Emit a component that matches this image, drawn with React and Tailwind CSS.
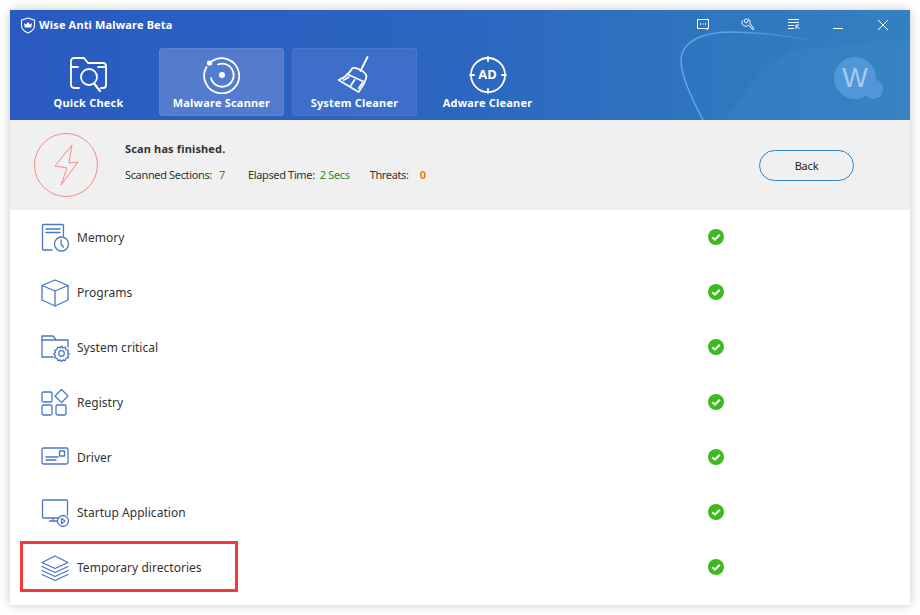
const font = { fontFamily: '"Noto Sans", Tahoma, sans-serif' };

const stroke = { fill: 'none', stroke: '#4a76c4', strokeWidth: 1.3, strokeLinejoin: 'round', strokeLinecap: 'round' };

const rowIcons = {
  memory: (
    <svg width="30" height="30" viewBox="0 0 30 30" {...stroke}>
      <path d="M12 27H3.500a1 1 0 0 1-1-1V2.500a1 1 0 0 1 1-1h19a1 1 0 0 1 1 1V13" />
      <path d="M6 6h14M6 9.500h14" />
      <circle cx="21.500" cy="21" r="7" />
      <path d="M21 17v4l2.500 3" />
    </svg>
  ),
  programs: (
    <svg width="30" height="30" viewBox="0 0 30 30" {...stroke}>
      <path d="M15 2 28 7.500V22L15 28 2 22V7.500Z" />
      <path d="M2 7.500 15 13 28 7.500M15 13v15" />
    </svg>
  ),
  system: (
    <svg width="30" height="30" viewBox="0 0 30 30" {...stroke}>
      <path d="M13 24H2V3h11l3 4h12v7" />
      <path d="M2 7h14" />
      <circle cx="21.500" cy="20.500" r="2.800" />
      <path d="m21.500 13 1.500 2 2.300-.8.700 2.400 2.400.700-.8 2.200 1.600 1.500-1.600 1.500.8 2.200-2.400.7-.7 2.200-2.300-.6-1.500 1.500-1.500-1.500-2.300.6-.7-2.200-2.400-.7.800-2.200-1.600-1.500 1.600-1.500-.8-2.200 2.400-.7.700-2.400 2.300.8z" />
    </svg>
  ),
  registry: (
    <svg width="30" height="30" viewBox="0 0 30 30" {...stroke}>
      <rect x="2" y="4" width="10" height="10" rx="1.500" />
      <rect x="2" y="17" width="10" height="10" rx="1.500" />
      <rect x="16" y="17" width="10" height="10" rx="1.500" />
      <path d="M21.500 1.500 28 8l-6.500 6.500L15 8Z" />
    </svg>
  ),
  driver: (
    <svg width="30" height="30" viewBox="0 0 30 30" {...stroke}>
      <rect x="2" y="5" width="26" height="16" rx="1.500" />
      <rect x="19.500" y="8" width="5" height="5" />
      <path d="M6 14h12M6 17h10" />
    </svg>
  ),
  startup: (
    <svg width="30" height="30" viewBox="0 0 30 30" {...stroke}>
      <path d="M19 20H3.500a1 1 0 0 1-1-1V3a1 1 0 0 1 1-1h23a1 1 0 0 1 1 1v14" />
      <path d="M13 20v3M9.500 23H17" />
      <circle cx="23" cy="23" r="5.500" />
      <path d="m21.500 20.500 3.500 2.500-3.500 2.500z" />
    </svg>
  ),
  temp: (
    <svg width="30" height="30" viewBox="0 0 30 30" {...stroke}>
      <path d="M15 3 28 9.500 15 15.500 2 9.500Z" />
      <path d="M2 13.500 15 19.500 28 13.500M2 17.500 15 23.500 28 17.500M2 21.500 15 27.500 28 21.500" />
    </svg>
  ),
};

const rows = [
  ['Memory', 'memory'],
  ['Programs', 'programs'],
  ['System critical', 'system'],
  ['Registry', 'registry'],
  ['Driver', 'driver'],
  ['Startup Application', 'startup'],
  ['Temporary directories', 'temp'],
];

const white = { fill: 'none', stroke: '#fff', strokeLinecap: 'round', strokeLinejoin: 'round' };

const tabs = [
  {
    label: 'Quick Check',
    bg: 'border-transparent',
    icon: (
      <svg width="38" height="38" viewBox="0 0 38 38" {...white} strokeWidth="1.800">
        <path d="M9 32H4a3 3 0 0 1-3-3V5a3 3 0 0 1 3-3h10l4 5h15a3 3 0 0 1 3 3v19a3 3 0 0 1-3 3h-2" />
        <path d="M1 11h7M28 11h8" />
        <circle cx="19" cy="21" r="8" />
        <path d="m24.500 28 5.500 7" strokeWidth="2.200" />
      </svg>
    ),
  },
  {
    label: 'Malware Scanner',
    bg: 'bg-[#537cce] border-[#5d84d2]',
    icon: (
      <svg width="38" height="38" viewBox="0 0 38 38" {...white} strokeWidth="1.800">
        <path d="M8.500 5.500a17.500 17.500 0 1 1-5 5.500" />
        <path d="M15 8.500A11.500 11.500 0 1 1 8 22" />
        <circle cx="6.500" cy="7" r="2.600" fill="#fff" stroke="none" />
        <circle cx="19" cy="19" r="3" fill="#fff" stroke="none" />
      </svg>
    ),
  },
  {
    label: 'System Cleaner',
    bg: 'bg-[#3d6fca] border-[#4777cf]',
    icon: (
      <svg width="38" height="38" viewBox="0 0 38 38" {...white} strokeWidth="1.800">
        <path d="M31.500 1 24.500 15" />
        <path d="M16.500 12C20 11 29 15 30.500 20 30 26 26 31 22.500 36L2.500 24C8 22 13 18 16.500 12Z" />
        <path d="M11 18 27.800 25.700M7.800 24l5-2.700M14.500 30l4-6M22.800 32.300l3.400-5" />
      </svg>
    ),
  },
  {
    label: 'Adware Cleaner',
    bg: 'border-transparent',
    icon: (
      <svg width="38" height="38" viewBox="0 0 38 38">
        <g {...white} strokeWidth="1.800">
          <circle cx="19" cy="19" r="17" />
          <path d="M19 1v4M19 33v4M1 19h4M33 19h4" />
        </g>
      </svg>
    ),
    overlay: 'AD',
  },
];

function Check() {
  return (
    <svg width="16" height="16" viewBox="0 0 16 16" className="mb-[2px]">
      <circle cx="8" cy="8" r="8" fill="#3fb91f" />
      <path d="m4.300 8.200 2.600 2.500 4.900-5" fill="none" stroke="#fff" strokeWidth="2" />
    </svg>
  );
}

export default function App() {
  return (
    <div className="w-[920px] h-[615px] bg-white p-[10px] overflow-hidden" style={font}>
      <div className="w-[900px] h-[595px] flex flex-col bg-white shadow-[0_0_10px_rgba(0,0,0,0.22)]">
        <header className="relative h-[110px] shrink-0 overflow-hidden bg-gradient-to-r from-[#2a5ac1] via-[#2c66c0] to-[#3481bf]">
          <svg className="absolute left-[670px] top-[20px]" width="230" height="90" viewBox="0 0 230 90" fill="none">
            <defs>
              <linearGradient id="curveFade" x1="0" x2="1" y1="0" y2="0">
                <stop offset="0" stopColor="#5ba6e6" />
                <stop offset="0.4" stopColor="#5ba6e6" />
                <stop offset="1" stopColor="#5ba6e6" stopOpacity="0" />
              </linearGradient>
            </defs>
            <path d="M45 90C65 55 90 35 110 20L230 10V90Z" fill="#3a86c6" opacity="0.45" />
            <path d="M23 90C10 65 1 45 1 30 2 10 25 2 50 2c30 0 60 4 90 10" stroke="url(#curveFade)" strokeWidth="1.500" />
          </svg>
          <div className="absolute left-[824px] top-[47px] w-[42px] h-[42px] rounded-full bg-[#5296da] flex items-center justify-center text-[27px] text-[#a9c9ec]" style={{ fontFamily: '"Liberation Sans", sans-serif' }}>
            W
          </div>
          <div className="absolute left-[854px] top-[69px] w-[19px] h-[20px] rounded-full bg-[#5296da]" />

          <div className="relative flex items-center h-[30px] pl-[10px] pt-[1px]">
            <svg width="16" height="17" viewBox="0 0 16 17" fill="none" className="mr-[3px]">
              <path d="M8 1 14.500 3.200V8.500c0 3.500-3 6-6.500 7.500C4.500 14.500 1.500 12 1.500 8.500V3.200Z" stroke="#fff" strokeWidth="1.100" />
              <path d="m4 6 2 1.500L8 5l2 2.500L12 6l-.8 4.500H4.800Z" fill="#fff" />
            </svg>
            <span className="text-[11px] font-bold text-white tracking-[0.15px]">Wise Anti Malware Beta</span>
            <div className="absolute inset-y-0 left-0 right-0 pointer-events-none">
              <svg className="absolute left-[687px] top-[9px]" width="12" height="11" viewBox="0 0 12 11" fill="none" stroke="#fff" strokeWidth="1">
                <path d="M.5.500h11v9h-2l1 1-2-1H.5z" />
                <path d="M3 5h1M5.500 5h1M8 5h1" strokeWidth="1.600" />
              </svg>
              <svg className="absolute left-[731px] top-[8px]" width="14" height="13" viewBox="0 0 14 13" fill="none" stroke="#fff" strokeWidth="1">
                <path d="M4.500 1 3 3l2 2 2-1.500C7.500 2 6 .5 4.500 1ZM2 2C0 4 1 7 3.500 8c1.500 .5 3 0 4-1l4 4.500 1.500-.5L9 5.500C9.500 4 9 2 7 .8" />
              </svg>
              <svg className="absolute left-[778px] top-[9px]" width="12" height="11" viewBox="0 0 12 11" fill="none" stroke="#fff" strokeWidth="1">
                <path d="M0 .5h11M0 3.500h11M0 6.500h6M0 9.500h6" />
                <path d="M8 6v4M8 6h3M8 6l3.500 4" />
              </svg>
              <div className="absolute left-[823px] top-[18px] w-[10px] h-px bg-white" />
              <svg className="absolute left-[867px] top-[9px]" width="12" height="12" viewBox="0 0 12 12" stroke="#fff" strokeWidth="1">
                <path d="m1 1 10 10M11 1 1 11" />
              </svg>
            </div>
          </div>

          <nav className="relative flex gap-[8px] pl-[16px] pt-[8px]">
            {tabs.map((t) => (
              <div key={t.label} className={`w-[125px] h-[68px] rounded-[3px] border flex flex-col items-center ${t.bg}`}>
                <div className="relative h-[38px] mt-[7px] flex items-center justify-center">
                  {t.icon}
                  {t.overlay && (
                    <span className="absolute inset-0 flex items-center justify-center text-[13px] font-bold text-white">{t.overlay}</span>
                  )}
                </div>
                <span className="text-[11px] font-bold text-white leading-[14px] mt-[2px] tracking-[0.2px]">{t.label}</span>
              </div>
            ))}
          </nav>
        </header>

        <section className="h-[90px] shrink-0 bg-[#f0f0f0] flex items-center pl-[24px] pr-[56px]">
          <div className="w-[64px] h-[64px] rounded-full border border-[#f58a8a] flex items-center justify-center">
            <svg width="26" height="44" viewBox="0 0 26 44" fill="none" stroke="#f58a8a" strokeWidth="1">
              <path d="M19 2 2 23l12 2-6 17 17-23-9 1Z" />
            </svg>
          </div>
          <div className="ml-[27px] flex-1 text-[11px] text-[#333] pb-[7px]">
            <div className="font-bold leading-[16px] mb-[10px] tracking-[0.15px]">Scan has finished.</div>
            <div className="flex leading-[16px] tracking-[-0.35px]">
              <span>Scanned Sections:</span>
              <span className="ml-[7px] text-[#2f8a1f]">7</span>
              <span className="ml-[23px]">Elapsed Time:</span>
              <span className="ml-[5px] text-[#2f8a1f]">2 Secs</span>
              <span className="ml-[20px]">Threats:</span>
              <span className="ml-[11px] font-bold text-[#f07c00]">0</span>
            </div>
          </div>
          <button className="w-[95px] h-[31px] rounded-full border border-[#2e84c9] text-[11px] text-[#222] pt-[2px] tracking-[-0.2px]">Back</button>
        </section>

        <main className="flex-1 relative">
          {rows.map(([label, key]) => (
            <div key={key} className="h-[55px] flex items-center pl-[30px] pr-[186px] text-[12px] text-[#333]">
              <span className="w-[30px] h-[30px] flex items-center justify-center">{rowIcons[key]}</span>
              <span className="ml-[7px] flex-1 tracking-[0.03px]">{label}</span>
              <Check />
            </div>
          ))}
          <div className="absolute left-[10px] top-[331px] w-[218px] h-[51px] border-[3px] border-[#f23a3a]" />
        </main>
      </div>
    </div>
  );
}
